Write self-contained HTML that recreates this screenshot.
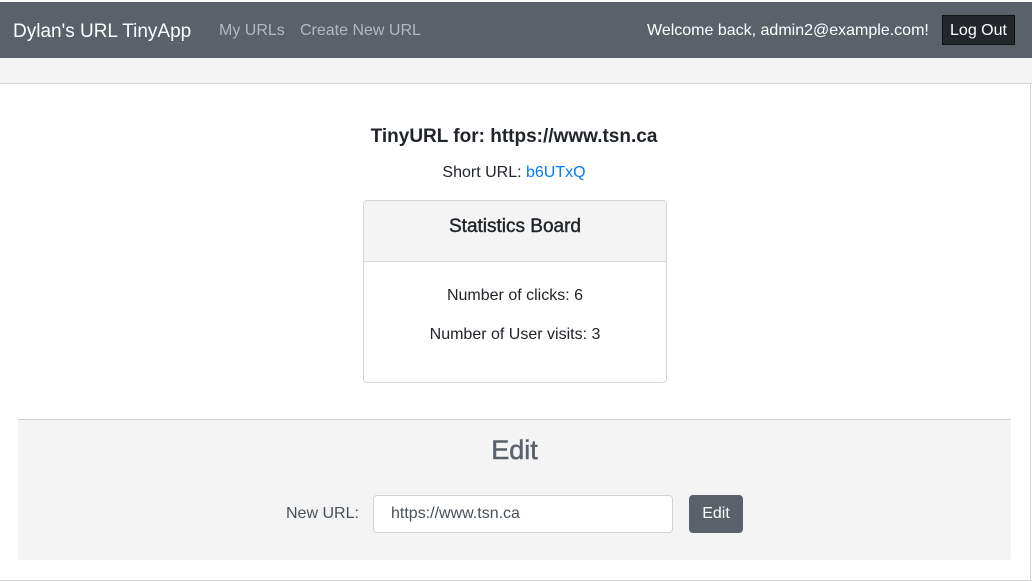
<!DOCTYPE html>
<html><head><style>
*{box-sizing:border-box;margin:0;padding:0}
body{width:1032px;height:582px;background:#fff;font-family:"Liberation Sans",sans-serif;color:#212529;position:relative;overflow:hidden}
.nav{position:absolute;left:0;top:2px;width:1032px;height:56px;background:#5a616a}
.nav span{position:absolute;top:20px;font-size:16px}
.strip{position:absolute;left:0;top:58px;width:1032px;height:26px;background:#f4f4f4;border-bottom:1px solid #d6d6d6}
.frame{position:absolute;left:0;top:84px;width:1031px;height:497px;border-right:1px solid #d6d6d6;border-bottom:1px solid #d6d6d6}
.c{position:absolute;left:0;width:1028px;text-align:center}
.card{position:absolute;left:363px;top:200px;width:304px;height:183px;border:1px solid #d6d6d6;border-radius:4px;overflow:hidden}
.edit{position:absolute;left:18px;top:419px;width:993px;height:141px;background:#f4f4f4;border-top:1px solid #d0d0d0;border-radius:0 0 3px 3px}
</style></head><body>
<div class="nav">
<span style="left:13px;color:#fff;font-size:19px;top:19px">Dylan's URL TinyApp</span>
<span style="left:219px;color:#b4b8bd">My URLs</span>
<span style="left:300px;color:#b4b8bd">Create New URL</span>
<span style="left:647px;color:#fff">Welcome back, admin2@example.com!</span>
<div style="position:absolute;left:942px;top:13px;width:73px;height:30px;background:#23272b;border:1px solid #111;color:#fff;font-size:16px;text-align:center;line-height:30px">Log Out</div>
</div>
<div class="strip"></div>
<div class="frame"></div>
<div class="c" style="top:126px;font-size:19px;font-weight:bold">TinyURL for: https://www.tsn.ca</div>
<div class="c" style="top:164px;font-size:16px">Short URL: <span style="color:#007bff">b6UTxQ</span></div>
<div class="card">
<div style="height:61px;background:#f4f4f4;border-bottom:1px solid #d6d6d6;text-align:center;font-size:19px;padding-top:15px;-webkit-text-stroke:0.4px #212529">Statistics Board</div>
<div style="text-align:center;font-size:16px;padding-top:25px">Number of clicks: 6</div>
<div style="text-align:center;font-size:16px;padding-top:21px">Number of User visits: 3</div>
</div>
<div class="edit">
<div style="position:absolute;left:0;width:993px;top:15px;text-align:center;font-size:27px;color:#5a616a;-webkit-text-stroke:0.5px #5a616a">Edit</div>
<div style="position:absolute;left:268px;top:85px;font-size:16px;color:#495057">New URL:</div>
<div style="position:absolute;left:355px;top:75px;width:300px;height:38px;background:#fff;border:1px solid #ced4da;border-radius:4px;font-size:16px;color:#495057;padding:9px 0 0 17px">https://www.tsn.ca</div>
<div style="position:absolute;left:671px;top:75px;width:54px;height:38px;background:#5a616a;border-radius:4px;color:#fff;font-size:16px;text-align:center;line-height:38px">Edit</div>
</div>
</body></html>
